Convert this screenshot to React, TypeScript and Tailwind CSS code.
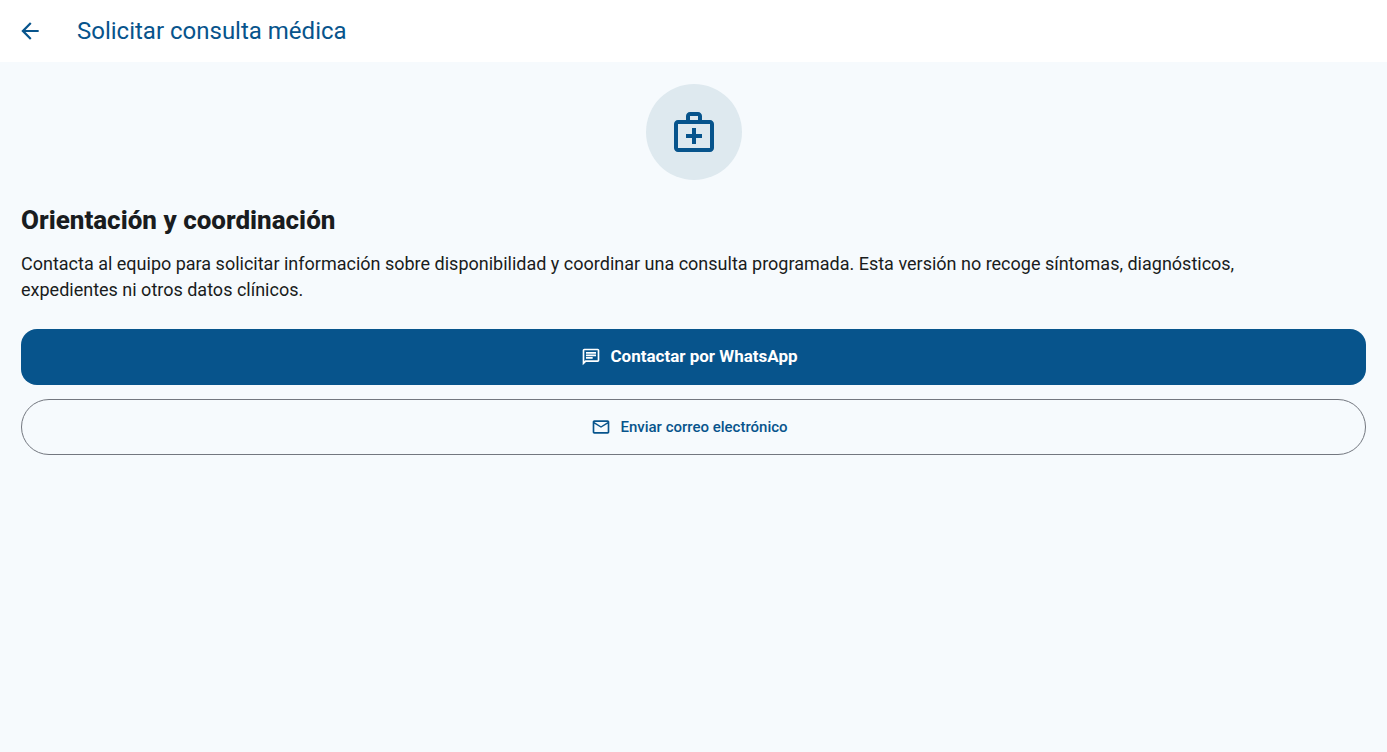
import React from "react";
import {
  MdArrowBack,
  MdOutlineChat,
  MdOutlineEmail,
  MdOutlineMedicalServices,
} from "react-icons/md";

export default function App() {
  return (
    <div className="min-h-screen bg-[#f6fafd] font-['Roboto',sans-serif] text-[#191c20]">
      <header className="flex h-[62px] items-center gap-[34px] bg-white px-[17px] text-[#07548c]">
        <button type="button" aria-label="Volver" className="flex size-[26px] items-center justify-center">
          <MdArrowBack className="size-[26px]" />
        </button>
        <h1 className="text-2xl">Solicitar consulta médica</h1>
      </header>

      <main className="flex flex-col px-[21px] pt-[22px]">
        <div className="flex size-24 items-center justify-center self-center rounded-full bg-[#dee9ef] text-[#07548c]">
          <MdOutlineMedicalServices className="size-12" />
        </div>

        <h2 className="mt-[22px] text-[26px] leading-9 font-extrabold">Orientación y coordinación</h2>
        <p className="mt-[13px] max-w-[1300px] text-lg leading-[26px]">
          Contacta al equipo para solicitar información sobre disponibilidad y coordinar una consulta
          programada. Esta versión no recoge síntomas, diagnósticos, expedientes ni otros datos clínicos.
        </p>

        <div className="mt-[26px] flex flex-col gap-[14px]">
          <button
            type="button"
            className="flex h-14 items-center justify-center gap-[9px] rounded-2xl bg-[#07548c] pr-6 pl-4 text-[17px] font-bold text-white"
          >
            <MdOutlineChat className="size-5" />
            Contactar por WhatsApp
          </button>
          <button
            type="button"
            className="flex h-14 items-center justify-center gap-[9px] rounded-full border border-[#73777f] pr-6 pl-4 text-[15px] font-medium text-[#07548c]"
          >
            <MdOutlineEmail className="size-5" />
            Enviar correo electrónico
          </button>
        </div>
      </main>
    </div>
  );
}
